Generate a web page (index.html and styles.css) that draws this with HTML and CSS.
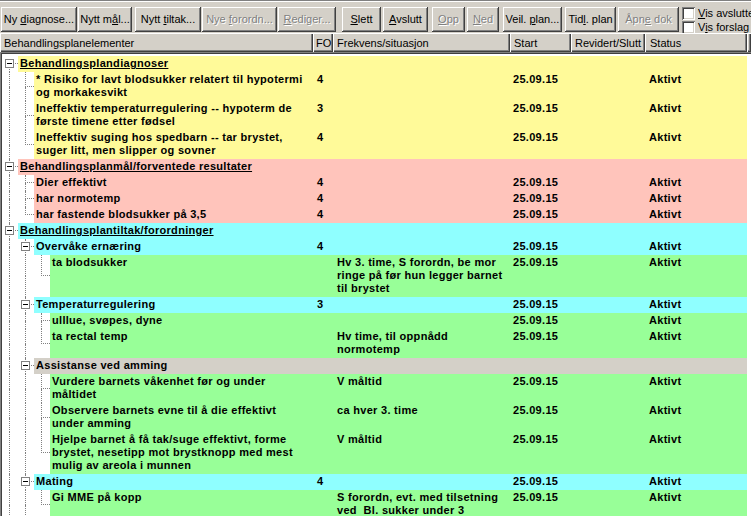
FILE: index.html
```html
<!DOCTYPE html>
<html lang="no">
<head>
<meta charset="utf-8">
<title>Behandlingsplan</title>
<link rel="stylesheet" href="styles.css">
</head>
<body>
<div class="toolbar">
  <button class="btn bt1">Ny <u>d</u>iagnose...</button>
  <button class="btn bt2">Nytt m<u>å</u>l...</button>
  <button class="btn bt3">Nytt <u>t</u>iltak...</button>
  <button class="btn bt4 dis">Nye <u>f</u>orordn...</button>
  <button class="btn bt5 dis"><u>R</u>ediger...</button>
  <button class="btn bt6"><u>S</u>lett</button>
  <button class="btn bt7"><u>A</u>vslutt</button>
  <button class="btn bt8 dis"><u>O</u>pp</button>
  <button class="btn bt9 dis"><u>N</u>ed</button>
  <button class="btn bt10">Veil. <u>p</u>lan...</button>
  <button class="btn bt11">Tid<u>l</u>. plan</button>
  <button class="btn bt12 dis">Åpn<u>e</u> dok</button>
  <div class="chk">
    <div class="cbrow"><span class="cb"></span><span class="lbl"><u>V</u>is avsluttede</span></div>
    <div class="cbrow"><span class="cb"></span><span class="lbl">V<u>i</u>s forslag</span></div>
  </div>
</div>

<div class="hdr">
  <div class="hc h1">Behandlingsplanelementer</div>
  <div class="hc h2">FO</div>
  <div class="hc h3">Frekvens/situasjon</div>
  <div class="hc h4">Start</div>
  <div class="hc h5">Revidert/Slutt</div>
  <div class="hc h6">Status</div>
  <div class="hc hf"></div>
</div>

<div class="tree">
  <div class="row y">
    <div class="c1"><span class="tc first"><i class="q tr"></i><i class="q br"></i><b class="box"></b></span><div class="nm root">Behandlingsplandiagnoser</div></div>
    <div class="d"></div><div class="d"></div><div class="d st"></div><div class="d"></div><div class="d"></div>
  </div>
  <div class="row y">
    <div class="c1"><span class="tc pipe"><i class="q tr"></i><i class="q br"></i></span><span class="tc tee"><i class="q tr"></i><i class="q br"></i></span><div class="nm">* Risiko for lavt blodsukker relatert til hypotermi<br>og morkakesvikt</div></div>
    <div class="d">4</div><div class="d"></div><div class="d st">25.09.15</div><div class="d"></div><div class="d">Aktivt</div>
  </div>
  <div class="row y">
    <div class="c1"><span class="tc pipe"><i class="q tr"></i><i class="q br"></i></span><span class="tc tee"><i class="q tr"></i><i class="q br"></i></span><div class="nm">Ineffektiv temperaturregulering -- hypoterm de<br>første timene etter fødsel</div></div>
    <div class="d">3</div><div class="d"></div><div class="d st">25.09.15</div><div class="d"></div><div class="d">Aktivt</div>
  </div>
  <div class="row y">
    <div class="c1"><span class="tc pipe"><i class="q tr"></i><i class="q br"></i></span><span class="tc elb"><i class="q tr"></i><i class="q br"></i></span><div class="nm">Ineffektiv suging hos spedbarn -- tar brystet,<br>suger litt, men slipper og sovner</div></div>
    <div class="d">4</div><div class="d"></div><div class="d st">25.09.15</div><div class="d"></div><div class="d">Aktivt</div>
  </div>

  <div class="row p">
    <div class="c1"><span class="tc tee"><i class="q tr"></i><i class="q br"></i><b class="box"></b></span><div class="nm root">Behandlingsplanmål/forventede resultater</div></div>
    <div class="d"></div><div class="d"></div><div class="d st"></div><div class="d"></div><div class="d"></div>
  </div>
  <div class="row p">
    <div class="c1"><span class="tc pipe"><i class="q tr"></i><i class="q br"></i></span><span class="tc tee"><i class="q tr"></i><i class="q br"></i></span><div class="nm">Dier effektivt</div></div>
    <div class="d">4</div><div class="d"></div><div class="d st">25.09.15</div><div class="d"></div><div class="d">Aktivt</div>
  </div>
  <div class="row p">
    <div class="c1"><span class="tc pipe"><i class="q tr"></i><i class="q br"></i></span><span class="tc tee"><i class="q tr"></i><i class="q br"></i></span><div class="nm">har normotemp</div></div>
    <div class="d">4</div><div class="d"></div><div class="d st">25.09.15</div><div class="d"></div><div class="d">Aktivt</div>
  </div>
  <div class="row p">
    <div class="c1"><span class="tc pipe"><i class="q tr"></i><i class="q br"></i></span><span class="tc elb"><i class="q tr"></i><i class="q br"></i></span><div class="nm">har fastende blodsukker på 3,5</div></div>
    <div class="d">4</div><div class="d"></div><div class="d st">25.09.15</div><div class="d"></div><div class="d">Aktivt</div>
  </div>

  <div class="row cy">
    <div class="c1"><span class="tc tee"><i class="q tr"></i><i class="q br"></i><b class="box"></b></span><div class="nm root">Behandlingsplantiltak/forordninger</div></div>
    <div class="d"></div><div class="d"></div><div class="d st"></div><div class="d"></div><div class="d"></div>
  </div>
  <div class="row cy">
    <div class="c1"><span class="tc pipe"><i class="q tr"></i><i class="q br"></i></span><span class="tc tee"><i class="q tr"></i><i class="q br"></i><b class="box"></b></span><div class="nm">Overvåke ernæring</div></div>
    <div class="d">4</div><div class="d"></div><div class="d st">25.09.15</div><div class="d"></div><div class="d">Aktivt</div>
  </div>
  <div class="row g">
    <div class="c1"><span class="tc pipe"><i class="q tr"></i><i class="q br"></i></span><span class="tc pipe"><i class="q tr"></i><i class="q br"></i></span><span class="tc elb"><i class="q tr"></i><i class="q br"></i></span><div class="nm">ta blodsukker</div></div>
    <div class="d"></div><div class="d">Hv 3. time, S forordn, be mor<br>ringe på før hun legger barnet<br>til brystet</div><div class="d st">25.09.15</div><div class="d"></div><div class="d">Aktivt</div>
  </div>
  <div class="row cy">
    <div class="c1"><span class="tc pipe"><i class="q tr"></i><i class="q br"></i></span><span class="tc tee"><i class="q tr"></i><i class="q br"></i><b class="box"></b></span><div class="nm">Temperaturregulering</div></div>
    <div class="d">3</div><div class="d"></div><div class="d st">25.09.15</div><div class="d"></div><div class="d">Aktivt</div>
  </div>
  <div class="row g">
    <div class="c1"><span class="tc pipe"><i class="q tr"></i><i class="q br"></i></span><span class="tc pipe"><i class="q tr"></i><i class="q br"></i></span><span class="tc tee"><i class="q tr"></i><i class="q br"></i></span><div class="nm">ulllue, svøpes, dyne</div></div>
    <div class="d"></div><div class="d"></div><div class="d st">25.09.15</div><div class="d"></div><div class="d">Aktivt</div>
  </div>
  <div class="row g">
    <div class="c1"><span class="tc pipe"><i class="q tr"></i><i class="q br"></i></span><span class="tc pipe"><i class="q tr"></i><i class="q br"></i></span><span class="tc elb"><i class="q tr"></i><i class="q br"></i></span><div class="nm">ta rectal temp</div></div>
    <div class="d"></div><div class="d">Hv time, til oppnådd<br>normotemp</div><div class="d st">25.09.15</div><div class="d"></div><div class="d">Aktivt</div>
  </div>
  <div class="row gr">
    <div class="c1"><span class="tc pipe"><i class="q tr"></i><i class="q br"></i></span><span class="tc tee"><i class="q tr"></i><i class="q br"></i><b class="box"></b></span><div class="nm">Assistanse ved amming</div></div>
    <div class="d"></div><div class="d"></div><div class="d st"></div><div class="d"></div><div class="d"></div>
  </div>
  <div class="row g">
    <div class="c1"><span class="tc pipe"><i class="q tr"></i><i class="q br"></i></span><span class="tc pipe"><i class="q tr"></i><i class="q br"></i></span><span class="tc tee"><i class="q tr"></i><i class="q br"></i></span><div class="nm">Vurdere barnets våkenhet før og under<br>måltidet</div></div>
    <div class="d"></div><div class="d">V måltid</div><div class="d st">25.09.15</div><div class="d"></div><div class="d">Aktivt</div>
  </div>
  <div class="row g">
    <div class="c1"><span class="tc pipe"><i class="q tr"></i><i class="q br"></i></span><span class="tc pipe"><i class="q tr"></i><i class="q br"></i></span><span class="tc tee"><i class="q tr"></i><i class="q br"></i></span><div class="nm">Observere barnets evne til å die effektivt<br>under amming</div></div>
    <div class="d"></div><div class="d">ca hver 3. time</div><div class="d st">25.09.15</div><div class="d"></div><div class="d">Aktivt</div>
  </div>
  <div class="row g">
    <div class="c1"><span class="tc pipe"><i class="q tr"></i><i class="q br"></i></span><span class="tc pipe"><i class="q tr"></i><i class="q br"></i></span><span class="tc elb"><i class="q tr"></i><i class="q br"></i></span><div class="nm">Hjelpe barnet å få tak/suge effektivt, forme<br>brystet, nesetipp mot brystknopp med mest<br>mulig av areola i munnen</div></div>
    <div class="d"></div><div class="d">V måltid</div><div class="d st">25.09.15</div><div class="d"></div><div class="d">Aktivt</div>
  </div>
  <div class="row cy">
    <div class="c1"><span class="tc pipe"><i class="q tr"></i><i class="q br"></i></span><span class="tc tee"><i class="q tr"></i><i class="q br"></i><b class="box"></b></span><div class="nm">Mating</div></div>
    <div class="d">4</div><div class="d"></div><div class="d st">25.09.15</div><div class="d"></div><div class="d">Aktivt</div>
  </div>
  <div class="row g">
    <div class="c1"><span class="tc pipe"><i class="q tr"></i><i class="q br"></i></span><span class="tc pipe"><i class="q tr"></i><i class="q br"></i></span><span class="tc elb"><i class="q tr"></i><i class="q br"></i></span><div class="nm">Gi MME på kopp</div></div>
    <div class="d"></div><div class="d">S forordn, evt. med tilsetning<br>ved&nbsp; Bl. sukker under 3</div><div class="d st">25.09.15</div><div class="d"></div><div class="d">Aktivt</div>
  </div>
</div>
</body>
</html>
```

FILE: styles.css
```css
html, body {
  margin: 0;
  padding: 0;
}
body {
  width: 751px;
  height: 516px;
  overflow: hidden;
  background: #d4d0c8;
  font-family: "Liberation Sans", Arial, sans-serif;
  font-size: 11px;
  color: #000;
}

/* toolbar */
.toolbar {
  display: flex;
  align-items: flex-start;
  height: 33px;
  box-sizing: border-box;
  padding: 7px 0 0 1px;
  box-shadow: inset 0 1px 0 #808080, inset 0 2px 0 #fff;
  white-space: nowrap;
}
.btn {
  flex: none;
  display: block;
  height: 25px;
  box-sizing: border-box;
  border: 0;
  padding: 0 0 1px;
  margin: 0;
  font: inherit;
  line-height: 23px;
  text-align: center;
  color: #000;
  background: #d4d0c8;
  box-shadow: inset -1px -1px 0 #404040, inset 1px 1px 0 #fff, inset -2px -2px 0 #808080, inset 2px 2px 0 #d4d0c8;
  white-space: nowrap;
  overflow: hidden;
}
.btn u { text-underline-offset: 1px; }
.dis {
  color: #808080;
  text-shadow: 1px 1px 0 #fff;
}
.bt1 { width: 76px; }
.bt2 { width: 54px; margin-left: 1px; }
.bt3 { width: 66px; margin-left: 3px; }
.bt4 { width: 75px; margin-left: 1px; }
.bt5 { width: 58px; margin-left: 1px; }
.bt6 { width: 39px; margin-left: 6px; }
.bt7 { width: 45px; margin-left: 2px; }
.bt8 { width: 33px; margin-left: 4px; }
.bt9 { width: 32px; margin-left: 2px; }
.bt10 { width: 59px; margin-left: 4px; }
.bt11 { width: 51px; margin-left: 3px; }
.bt12 { width: 61px; margin-left: 2px; }

.chk {
  margin-left: 3px;
  display: flex;
  flex-direction: column;
  gap: 1px;
}
.cbrow {
  display: flex;
  align-items: center;
  height: 13px;
  gap: 3px;
  white-space: nowrap;
}
.lbl { line-height: 13px; }
.cb {
  flex: none;
  width: 13px;
  height: 13px;
  background: #fff;
  box-shadow: inset 1px 1px 0 #808080, inset -1px -1px 0 #fff, inset 2px 2px 0 #404040, inset -2px -2px 0 #d4d0c8;
}

/* column header */
.hdr {
  display: flex;
  height: 19px;
}
.hc {
  flex: none;
  box-sizing: border-box;
  height: 19px;
  padding-left: 4px;
  display: flex;
  align-items: center;
  white-space: nowrap;
  overflow: hidden;
  background: #d4d0c8;
  box-shadow: inset 1px 1px 0 #fff, inset -1px -1px 0 #404040, inset -2px -2px 0 #808080;
}
.h1 { width: 313px; }
.h2 { width: 20px; padding-left: 3px; }
.h3 { width: 177px; }
.h4 { width: 61px; }
.h5 { width: 74px; }
.h6 { width: 102px; padding-left: 5px; }
.hf { flex: 1; }

/* tree */
.tree {
  height: 464px;
  box-sizing: border-box;
  padding: 4px 0 0 2px;
  background: #fff;
  box-shadow: inset 1px 1px 0 #808080, inset 2px 2px 0 #404040;
  overflow: hidden;
  font-weight: bold;
  letter-spacing: 0.3px;
}
.row {
  display: grid;
  grid-template-columns: 311px 20px 177px 61px 74px 102px;
  width: 745px;
  line-height: 13px;
}
.y { background: #fffa99; }
.p { background: #ffc4bb; }
.cy { background: #8fffff; }
.g { background: #98ff98; }
.gr { background: #d4d0c8; }

.c1 {
  display: flex;
  min-width: 0;
}
.nm {
  flex: 1;
  min-width: 0;
  padding: 1px 2px 2px;
  white-space: nowrap;
}
.root {
  text-decoration: underline;
  text-underline-offset: 1px;
}
.d {
  padding: 1px 0 2px 4px;
  white-space: nowrap;
}
.st { padding-left: 3px; }

/* tree lines */
.tc {
  flex: none;
  width: 16px;
  display: grid;
  grid-template-columns: 7px 9px;
  grid-template-rows: 1fr 1fr;
  background: #fff;
}
.q { display: block; }
.tr { grid-area: 1 / 2 / 2 / 3; }
.br { grid-area: 2 / 2 / 3 / 3; }
.pipe .tr, .pipe .br,
.tee .tr, .tee .br,
.elb .tr,
.first .br {
  border-left: 1px dotted #808080;
}
.tee .tr, .elb .tr, .first .tr {
  border-bottom: 1px dotted #808080;
}
.box {
  grid-area: 1 / 1 / 2 / 3;
  align-self: end;
  justify-self: start;
  margin: 0 0 -4px 3px;
  width: 9px;
  height: 9px;
  box-sizing: border-box;
  border: 1px solid #808080;
  background: #fff;
  display: flex;
  align-items: center;
  justify-content: center;
}
.box::after {
  content: "";
  width: 5px;
  height: 1px;
  background: #000;
}
```
